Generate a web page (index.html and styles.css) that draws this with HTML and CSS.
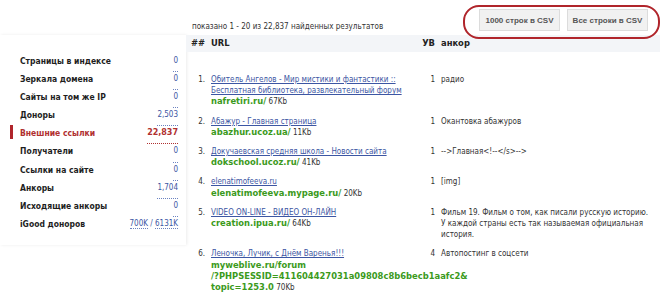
FILE: index.html
```html
<!DOCTYPE html>
<html lang="ru">
<head>
  <meta charset="UTF-8" />
  <title>Внешние ссылки</title>
  <link rel="stylesheet" href="styles.css">
</head>
<body>
  <div class="layout">
    <ul class="side">
      <li><span>Страницы в индексе</span><a href="#">0</a></li>
      <li><span>Зеркала домена</span><a href="#">0</a></li>
      <li><span>Сайты на том же IP</span><a href="#">0</a></li>
      <li><span>Доноры</span><a href="#">2,503</a></li>
      <li class="active"><span>Внешние ссылки</span><a href="#">22,837</a></li>
      <li><span>Получатели</span><a href="#">0</a></li>
      <li><span>Ссылки на сайте</span><a href="#">0</a></li>
      <li><span>Анкоры</span><a href="#">1,704</a></li>
      <li><span>Исходящие анкоры</span><a href="#">0</a></li>
      <li><span>iGood доноров</span><span class="pair"><a href="#">700K</a> / <a href="#">6131K</a></span></li>
    </ul>

    <div class="main">
      <div class="topbar">
        <div class="found">показано 1 - 20 из 22,837 найденных результатов</div>
        <div class="export">
          <button>1000 строк в CSV</button>
          <button>Все строки в CSV</button>
          <div class="mark"></div>
        </div>
      </div>

      <table class="results">
        <colgroup>
          <col class="c-num"><col class="c-url"><col class="c-uv"><col class="c-anchor">
        </colgroup>
        <thead>
          <tr><th class="num">##</th><th>URL</th><th class="uv">УВ</th><th>анкор</th></tr>
        </thead>
        <tbody>
          <tr class="gap"><td colspan="4"></td></tr>
          <tr>
            <td class="num">1.</td>
            <td><a href="#">Обитель Ангелов - Мир мистики и фантастики ::<br>Бесплатная библиотека, развлекательный форум</a><br><b class="host">nafretiri.ru/</b> <span class="size">67Kb</span></td>
            <td class="uv">1</td><td>радио</td>
          </tr>
          <tr>
            <td class="num">2.</td>
            <td><a href="#">Абажур - Главная страница</a><br><b class="host">abazhur.ucoz.ua/</b> <span class="size">11Kb</span></td>
            <td class="uv">1</td><td>Окантовка абажуров</td>
          </tr>
          <tr>
            <td class="num">3.</td>
            <td><a href="#">Докучаевская средняя школа - Новости сайта</a><br><b class="host">dokschool.ucoz.ru/</b> <span class="size">41Kb</span></td>
            <td class="uv">1</td><td>--&gt;Главная&lt;!--&lt;/s&gt;--&gt;</td>
          </tr>
          <tr>
            <td class="num">4.</td>
            <td><a href="#">elenatimofeeva.ru</a><br><b class="host">elenatimofeeva.mypage.ru/</b> <span class="size">20Kb</span></td>
            <td class="uv">1</td><td>[img]</td>
          </tr>
          <tr>
            <td class="num">5.</td>
            <td><a href="#">VIDEO ON-LINE - ВИДЕО ОН-ЛАЙН</a><br><b class="host">creation.ipua.ru/</b> <span class="size">64Kb</span></td>
            <td class="uv">1</td><td>Фильм 19. Фильм о том, как писали русскую историю.<br>У каждой страны есть так называемая официальная<br>история.</td>
          </tr>
          <tr>
            <td class="num">6.</td>
            <td><a href="#">Леночка, Лучик, с Днём Варенья!!!</a><br><b class="host">myweblive.ru/forum<br>/?PHPSESSID=411604427031a09808c8b6becb1aafc2&amp;<br>topic=1253.0</b> <span class="size">70Kb</span></td>
            <td class="uv">4</td><td>Автопостинг в соцсети</td>
          </tr>
        </tbody>
      </table>
    </div>
  </div>
</body>
</html>
```

FILE: styles.css
```css
* { box-sizing: border-box; }
body {
  margin: 0;
  font-family: 'DejaVu Sans Condensed', 'DejaVu Sans', sans-serif;
  font-size: 8px;
  color: #333;
  background: #fff;
}
a { color: #3c56a3; }
b, th {
  font-family: 'DejaVu Sans', sans-serif;
  font-size: 8.4px;
  font-weight: bold;
}

.layout { display: flex; align-items: flex-start; }

/* left menu */
.side {
  list-style: none;
  margin: 35px 0 0;
  padding: 19px 8px 10px 20px;
  width: 186px;
  flex: none;
  box-shadow: 1px 0 3px rgba(0, 0, 0, 0.08);
}
.side li {
  position: relative;
  display: flex;
  justify-content: space-between;
  height: 18.1px;
  line-height: 14px;
}
.side li > span:first-child {
  font-size: 8.5px;
  font-weight: bold;
  color: #1e1e1e;
}
.side a {
  text-decoration: none;
  border-bottom: 1px dotted #6b82c0;
}
.side .pair { color: #3c56a3; }
.side .active > span:first-child,
.side .active a { color: #b03030; }
.side .active a {
  border-bottom-color: #b03030;
  font-family: 'DejaVu Sans', sans-serif;
  font-weight: bold;
}
.side .active::before {
  content: "";
  position: absolute;
  left: -10px;
  top: -1px;
  width: 3px;
  height: 14px;
  background: #b0252b;
}

/* results */
.main { width: 474px; }
.topbar {
  display: flex;
  justify-content: space-between;
  height: 35px;
}
.found {
  align-self: flex-end;
  padding: 0 0 3px 6px;
  line-height: 11px;
}
.export {
  position: relative;
  display: flex;
  gap: 7px;
  margin: 9px 12px 0 0;
}
.export button {
  font-family: 'Liberation Sans', Arial, sans-serif;
  font-size: 8px;
  font-weight: bold;
  color: #555;
  background: #f1f1f1;
  border: 1px solid #dcdcdc;
  height: 22px;
  width: 81px;
  padding: 0;
}
.mark {
  position: absolute;
  left: -16px;
  right: -12px;
  top: -4px;
  bottom: -4px;
  border: 2px solid #b0252b;
  border-radius: 16px;
}

.results {
  width: 474px;
  table-layout: fixed;
  border-collapse: collapse;
  line-height: 11.2px;
}
.c-num { width: 22px; }
.c-url { width: 211px; }
.c-uv { width: 19px; }
.c-anchor { width: 222px; }
.results th {
  background: #f3f5f8;
  text-align: left;
  color: #222;
  height: 17px;
  padding: 0 3px;
}
.results td {
  vertical-align: top;
  padding: 4px 3px;
  white-space: nowrap;
}
.results .gap td { height: 18px; padding: 0; }
.results .num { text-align: right; padding-left: 0; }
.results .uv { text-align: right; }
.host { color: #3b9a1c; }
```
